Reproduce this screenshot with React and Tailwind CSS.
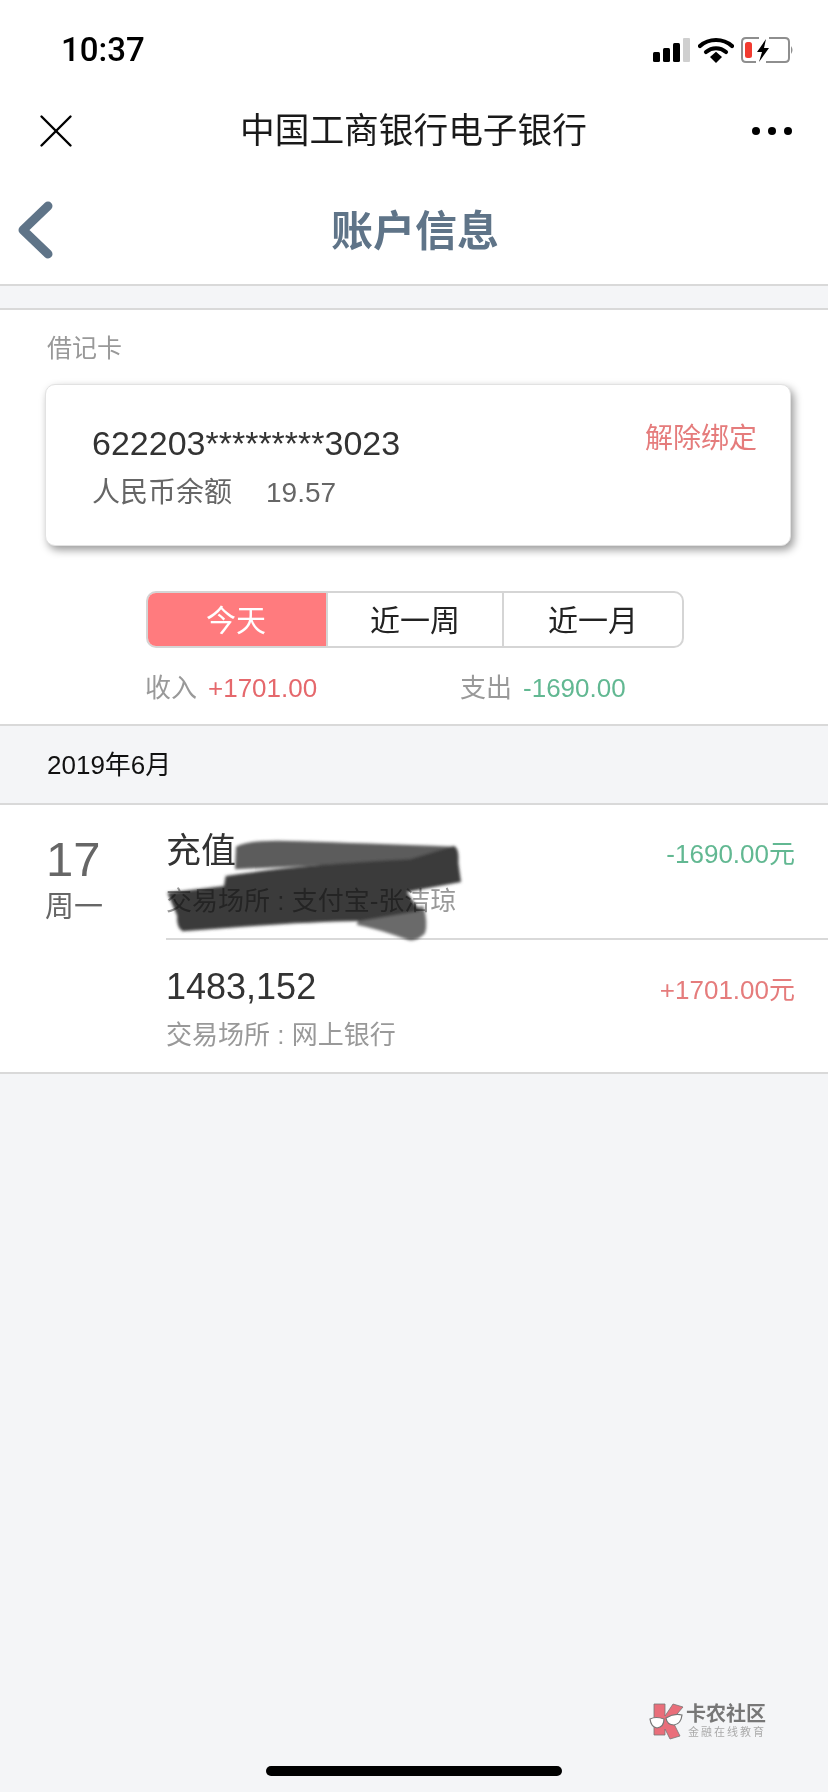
import { X } from 'lucide-react';

const font = { fontFamily: '"Liberation Sans", "Noto Sans CJK SC", sans-serif' };

function StatusIcons() {
  return (
    <div className="flex items-center">
      <svg width="38" height="26" viewBox="0 0 38 26">
        <rect x="0" y="15" width="7" height="10" rx="1.5" fill="#000" />
        <rect x="10" y="11" width="7" height="14" rx="1.5" fill="#000" />
        <rect x="20" y="6" width="7" height="19" rx="1.5" fill="#000" />
        <rect x="30" y="1" width="7" height="24" rx="1" fill="#cfcfcf" />
      </svg>
      <svg width="36" height="26" viewBox="0 0 36 26" className="ml-[7px]">
        <path d="M2 9 C11 1 25 1 34 9" fill="none" stroke="#000" strokeWidth="4.2" strokeLinecap="round" />
        <path d="M8 15 C14 10 22 10 28 15" fill="none" stroke="#000" strokeWidth="4.2" strokeLinecap="round" />
        <path d="M12 20 L18 14.8 L24 20 L18 26 Z" fill="#000" />
      </svg>
      <svg width="55" height="28" viewBox="0 0 55 28" className="ml-[6px]">
        <path d="M19 2 H6 Q2 2 2 6 V22 Q2 26 6 26 H16" fill="none" stroke="#8e8e8e" strokeWidth="2" />
        <path d="M29 2 H45 Q49 2 49 6 V22 Q49 26 45 26 H26" fill="none" stroke="#8e8e8e" strokeWidth="2" />
        <rect x="5" y="6" width="7" height="16" rx="2.5" fill="#f23b30" />
        <path d="M26 3 L17 16 H22 L19 26 L29 12 H24 Z" fill="#000" />
        <path d="M51 10 Q54 14 51 18 Z" fill="#8e8e8e" />
      </svg>
    </div>
  );
}

// the hand drawn blot over the first transaction
function Scribble() {
  return (
    <svg className="absolute left-[160px] top-[21px] pointer-events-none mix-blend-multiply" width="310" height="125" viewBox="0 0 930 375">
      <defs>
        <filter id="soft">
          <feGaussianBlur stdDeviation="5" />
        </filter>
      </defs>
      <g filter="url(#soft)">
        <path d="M228 62 Q270 38 420 46 Q600 52 885 62 L895 110 L750 105 L225 130 Z" fill="#5c5c5c" />
        <path d="M600 270 L790 240 Q805 290 795 322 Q770 348 745 342 Q660 310 590 296 Z" fill="#6a6a6a" />
        <path d="M197 150 Q400 118 750 100 L882 60 Q898 66 895 110 L903 168 L740 198 L780 255 L600 285 Q400 288 68 316 Q48 302 52 270 L22 200 L192 180 Z" fill="#3a3a3a" />
      </g>
    </svg>
  );
}

function Logo() {
  return (
    <div className="flex items-center">
      <svg width="35" height="37" viewBox="0 0 35 37">
        <path d="M5 1 H16 V13 L24 1 L34 4 L23 17 L31 33 L21 36 L16 26 V32 H5 Z" fill="#e96e7a" stroke="#777" strokeWidth="0.8" />
        <path d="M1 16 Q7 13 15 16 Q15 24 8 25 Q2 24 1 16 Z" fill="#fff" stroke="#777" strokeWidth="1.2" />
        <path d="M17 15 Q25 10 33 12 Q32 21 25 22 Q18 22 17 15 Z" fill="#fff" stroke="#777" strokeWidth="1.2" />
      </svg>
      <div className="flex flex-col ml-[2px]">
        <span className="text-[20px] leading-[20px] font-bold text-[#777]">卡农社区</span>
        <span className="text-[11px] leading-[14px] tracking-[2px] ml-[2px] mt-[1px] text-[#aaa]">金融在线教育</span>
      </div>
    </div>
  );
}

export default function App() {
  return (
    <div className="h-[1792px] w-[828px] bg-[#f4f5f7] flex flex-col overflow-hidden" style={font}>
      {/* Status bar */}
      <div className="h-[100px] bg-white flex items-center justify-between pl-[61px] pr-[33px]">
        <span className="font-['Roboto'] text-[33px] font-medium text-black">10:37</span>
        <StatusIcons />
      </div>

      {/* WeChat title bar */}
      <div className="h-[62px] bg-white flex items-center justify-between pl-[27px] pr-[36px]">
        <X className="w-[58px] h-[58px] -mr-[10px] text-black" strokeWidth={1} />
        <span className="text-[34.7px] text-[#1a1a1a]">中国工商银行电子银行</span>
        <div className="flex gap-[8px]">
          <span className="w-[8px] h-[8px] rounded-full bg-black"></span>
          <span className="w-[8px] h-[8px] rounded-full bg-black"></span>
          <span className="w-[8px] h-[8px] rounded-full bg-black"></span>
        </div>
      </div>

      {/* Page title */}
      <div className="h-[124px] bg-white border-b-2 border-[#d9d9d9] flex items-center pl-[17px] pt-[14px] shrink-0">
        <svg width="38" height="58" viewBox="0 0 38 58" className="shrink-0">
          <path d="M31 5 L6 29 L31 53" fill="none" stroke="#5f7488" strokeWidth="9" strokeLinecap="round" strokeLinejoin="round" />
        </svg>
        <span className="ml-[276px] mt-[2px] text-[42px] font-bold text-[#5f7488]">账户信息</span>
      </div>

      <div className="h-[22px] shrink-0"></div>

      {/* Account section */}
      <div className="bg-white border-t-2 border-b-2 border-[#d9d9d9] h-[418px] shrink-0 px-[45px]">
        <div className="text-[25px] leading-[30px] text-[#999] pt-[23px] pl-[2px] h-[74px]">借记卡</div>
        <div className="w-[746px] h-[162px] bg-white rounded-[10px] border border-[#e2e2e2] shadow-[3px_4px_8px_rgba(0,0,0,0.4)] pl-[46px] pr-[33px] pt-[40px] flex justify-between">
          <div>
            <div className="text-[34px] leading-[36px] text-[#333]">622203*********3023</div>
            <div className="mt-[14px] flex items-center text-[#666]">
              <span className="text-[28px] leading-[36px]">人民币余额</span>
              <span className="ml-[34px] text-[28px] leading-[36px]">19.57</span>
            </div>
          </div>
          <span className="text-[28px] leading-[32px] text-[#e57c7c] -mt-[2px]">解除绑定</span>
        </div>

        <div className="mt-[45px] ml-[101px] w-[538px] h-[57px] flex rounded-[10px] border-2 border-[#d5d5d5] overflow-hidden">
          <div className="w-[178px] bg-[#ff7b7e] text-white text-[30px] pt-[2px] pr-[2px] flex items-center justify-center">今天</div>
          <div className="w-[178px] border-l-2 border-r-2 border-[#d5d5d5] text-[30px] pt-[2px] text-[#222] flex items-center justify-center">近一周</div>
          <div className="flex-1 text-[30px] pt-[2px] text-[#222] flex items-center justify-center">近一月</div>
        </div>

        <div className="mt-[23px] ml-[100px] flex items-center text-[26px] leading-[34px]">
          <span className="text-[#999]">收入</span>
          <span className="ml-[11px] text-[#e5686c] w-[252px]">+1701.00</span>
          <span className="text-[#999]">支出</span>
          <span className="ml-[11px] text-[#62b892]">-1690.00</span>
        </div>
      </div>

      {/* Month heading */}
      <div className="h-[77px] shrink-0 flex items-center pl-[47px] pt-[2px] text-[26px] text-[#111]">2019年6月</div>

      {/* Transactions */}
      <div className="relative bg-white border-t-2 border-b-2 border-[#d9d9d9] flex shrink-0 h-[271px]">
        <div className="w-[166px] shrink-0 flex flex-col pl-[46px] pt-[28px]">
          <span className="text-[49px] leading-[52px] text-[#666]">17</span>
          <span className="text-[29px] leading-[36px] -ml-[1px] mt-[4px] text-[#666]">周一</span>
        </div>
        <div className="flex-1 flex flex-col">
          <div className="h-[135px] border-b-2 border-[#d9d9d9] flex justify-between pr-[33px] pt-[24px] shrink-0">
            <div>
              <div className="text-[35px] leading-[44px] text-[#333]">充值</div>
              <div className="text-[26px] leading-[32px] mt-[12px] text-[#999]">交易场所 : 支付宝-张洁琼</div>
            </div>
            <span className="text-[26px] leading-[32px] mt-[9px] text-[#62b892]">-1690.00元</span>
          </div>
          <div className="flex justify-between pr-[33px] pt-[25px]">
            <div>
              <div className="text-[36px] leading-[44px] text-[#333]">1483,152</div>
              <div className="text-[26px] leading-[32px] mt-[10px] text-[#999]">交易场所 : 网上银行</div>
            </div>
            <span className="text-[26px] leading-[32px] mt-[9px] text-[#e57c7c]">+1701.00元</span>
          </div>
        </div>
        <Scribble />
      </div>

      {/* Watermark and home indicator */}
      <div className="flex-1 flex flex-col items-end justify-end">
        <div className="mr-[62px]">
          <Logo />
        </div>
        <div className="self-start ml-[266px] mt-[26px] mb-[16px] w-[296px] h-[10px] rounded-full bg-black"></div>
      </div>
    </div>
  );
}
